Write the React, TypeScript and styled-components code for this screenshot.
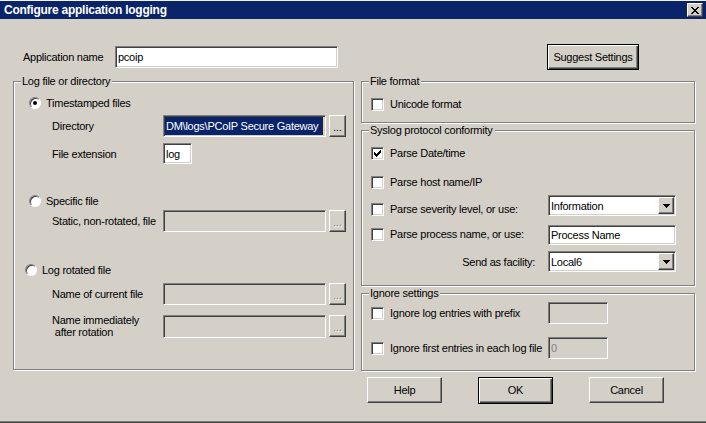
import React from 'react'
import styled, { createGlobalStyle } from 'styled-components'

const GlobalStyle = createGlobalStyle`
  html, body {
    margin: 0;
    padding: 0;
    background: #d4d0c8;
  }
  body {
    font-family: "Liberation Sans", Arial, sans-serif;
    font-size: 11px;
    letter-spacing: -0.25px;
    color: #000;
  }
`

const Window = styled.div`
  width: 706px;
  height: 423px;
  box-sizing: border-box;
  background: #d4d0c8;
  border-top: 1px solid #f4f3ef;
  border-bottom: 1px solid #404040;
  box-shadow: inset 0 -1px #808080;
  display: flex;
  flex-direction: column;
  overflow: hidden;
`

const TitleBar = styled.div`
  height: 18px;
  flex-shrink: 0;
  background: #0a246a;
  display: flex;
  align-items: center;
  justify-content: space-between;
  padding: 0 3px 0 4px;
`

const Title = styled.span`
  color: #fff;
  font-weight: bold;
  font-size: 12px;
  letter-spacing: -0.25px;
`

const raised = `
  border: 1px solid;
  border-color: #fff #404040 #404040 #fff;
  box-shadow: inset -1px -1px #808080, inset 1px 1px #d4d0c8;
`

const sunken = `
  border: 1px solid;
  border-color: #808080 #fff #fff #808080;
  box-shadow: inset 1px 1px #404040, inset -1px -1px #d4d0c8;
`

const CloseButton = styled.div`
  width: 16px;
  height: 14px;
  box-sizing: border-box;
  background: #d4d0c8;
  ${raised}
  display: flex;
  align-items: center;
  justify-content: center;
`

const Body = styled.div`
  display: flex;
  flex-direction: column;
  padding: 0 11px 0 13px;
`

const HeaderRow = styled.div`
  display: flex;
  align-items: center;
  height: 26px;
  margin-top: 25px;
  padding: 0 56px 0 10px;
`

const Columns = styled.div`
  display: grid;
  grid-template-columns: 341px 334px;
  column-gap: 7px;
  margin-top: 11px;
  align-items: start;
`

const RightColumn = styled.div`
  display: flex;
  flex-direction: column;
`

const GroupBox = styled.div<{ $h: number; $mt?: number }>`
  position: relative;
  box-sizing: border-box;
  height: ${p => p.$h}px;
  margin-top: ${p => p.$mt ?? 0}px;
  border: 1px solid #808080;
  box-shadow: inset 1px 1px #fff, 1px 1px #fff;
  display: flex;
  flex-direction: column;
  padding-left: ${p => (p.$h > 200 ? 15 : 9)}px;
`

const Caption = styled.span`
  position: absolute;
  top: -7px;
  left: 7px;
  padding: 0 2px 0 1px;
  line-height: 13px;
  background: #d4d0c8;
`

const Row = styled.div<{ $mt: number; $ml?: number; $align?: string }>`
  display: flex;
  align-items: ${p => p.$align ?? 'center'};
  margin-top: ${p => p.$mt}px;
  margin-left: ${p => p.$ml ?? 0}px;
  min-height: 14px;
`

const Label = styled.span<{ $w?: number; $right?: boolean; $pr?: number }>`
  width: ${p => (p.$w ? `${p.$w}px` : 'auto')};
  flex-shrink: 0;
  box-sizing: border-box;
  text-align: ${p => (p.$right ? 'right' : 'left')};
  padding-right: ${p => p.$pr ?? 0}px;
  line-height: 12px;
  white-space: pre;
`

const Field = styled.div<{ $w: number; $h: number; $disabled?: boolean; $dim?: boolean }>`
  width: ${p => p.$w}px;
  height: ${p => p.$h}px;
  flex-shrink: 0;
  box-sizing: border-box;
  background: ${p => (p.$disabled ? '#d4d0c8' : '#fff')};
  color: ${p => (p.$dim ? '#808080' : '#000')};
  ${sunken}
  display: flex;
  align-items: center;
  padding: 0 2px 0 2px;
  overflow: hidden;
  white-space: nowrap;
`

const Selected = styled.span`
  align-self: stretch;
  flex: 1;
  margin: 1px -1px 1px -1px;
  padding-left: 1px;
  background: #0a246a;
  color: #fff;
  display: flex;
  align-items: center;
  overflow: hidden;
  white-space: nowrap;
`

const Caret = styled.span`
  width: 1px;
  align-self: stretch;
  margin-left: auto;
  background: #f5d38a;
  flex-shrink: 0;
`

const BrowseButton = styled.div<{ $disabled?: boolean }>`
  width: 17px;
  height: 22px;
  margin-left: 3px;
  box-sizing: border-box;
  flex-shrink: 0;
  background: #d4d0c8;
  ${raised}
  display: flex;
  align-items: center;
  justify-content: center;
  padding-top: 3px;
  font-size: 10px;
  letter-spacing: 0;
  color: ${p => (p.$disabled ? '#808080' : '#000')};
  text-shadow: ${p => (p.$disabled ? '1px 1px #fff' : 'none')};
`

const RadioCircle = styled.span<{ $checked?: boolean }>`
  width: 12px;
  height: 12px;
  box-sizing: border-box;
  border-radius: 50%;
  background: #fff;
  border: 1px solid;
  border-color: #808080 #fff #fff #808080;
  box-shadow: inset 1px 1px #404040;
  display: flex;
  align-items: center;
  justify-content: center;
  flex-shrink: 0;
  margin-right: 5px;
  &::after {
    content: '';
    width: 4px;
    height: 4px;
    border-radius: 50%;
    background: #000;
    display: ${p => (p.$checked ? 'block' : 'none')};
  }
`

const CheckGroup = styled.div<{ $w?: number; $mt?: number }>`
  display: flex;
  align-items: center;
  width: ${p => (p.$w ? `${p.$w}px` : 'auto')};
  height: 14px;
  flex-shrink: 0;
  margin-top: ${p => p.$mt ?? 0}px;
`

const CheckBox = styled.span`
  width: 13px;
  height: 13px;
  box-sizing: border-box;
  background: #fff;
  ${sunken}
  display: flex;
  align-items: center;
  justify-content: center;
  flex-shrink: 0;
  margin-right: 6px;
`

const Combo = styled(Field)`
  padding: 0 2px 0 2px;
  justify-content: space-between;
`

const ComboArrow = styled.span`
  width: 16px;
  height: 17px;
  box-sizing: border-box;
  background: #d4d0c8;
  ${raised}
  display: flex;
  align-items: center;
  justify-content: center;
  flex-shrink: 0;
  margin-right: -1px;
`

const ButtonRow = styled.div`
  display: flex;
  margin-top: 6px;
  padding-left: 6px;
  column-gap: 36px;
`

const PushButton = styled.div<{ $default?: boolean; $w: number; $h: number; $push?: boolean }>`
  width: ${p => p.$w}px;
  height: ${p => p.$h}px;
  box-sizing: border-box;
  flex-shrink: 0;
  margin-left: ${p => (p.$push ? 'auto' : '0')};
  background: #d4d0c8;
  border: 1px solid;
  border-color: ${p => (p.$default ? '#000' : '#fff #404040 #404040 #fff')};
  box-shadow: ${p =>
    p.$default
      ? 'inset 1px 1px #fff, inset -1px -1px #404040, inset -2px -2px #808080'
      : 'inset -1px -1px #808080, inset 1px 1px #d4d0c8'};
  display: flex;
  align-items: center;
  justify-content: center;
  padding-bottom: 1px;
`

const CheckMark = () => (
  <svg width="7" height="7" viewBox="0 0 7 7" shapeRendering="crispEdges">
    <path d="M0 2h1v1h1v1h1V3h1V2h1V1h1V0h1v3h-1v1h-1v1h-1v1h-1v1H2V6H1V5H0z" fill="#000" />
  </svg>
)

const DownArrow = () => (
  <svg width="7" height="4" viewBox="0 0 7 4" shapeRendering="crispEdges">
    <path d="M0 0h7v1h-1v1h-1v1h-1v1H3V3H2V2H1V1H0z" fill="#000" />
  </svg>
)

const CloseGlyph = () => (
  <svg width="8" height="7" viewBox="0 0 8 7" shapeRendering="crispEdges">
    <path
      d="M0 0h2v1h1v1h2V1h1V0h2v1H7v1H6v1H5v1h1v1h1v1h1v1H6V6H5V5H3v1H2v1H0V6h1V5h1V4h1V3H2V2H1V1H0z"
      fill="#000"
    />
  </svg>
)

type OptionProps = { checked?: boolean; children: React.ReactNode }

const Radio: React.FC<OptionProps> = ({ checked, children }) => (
  <>
    <RadioCircle $checked={checked} />
    <Label>{children}</Label>
  </>
)

const Check: React.FC<OptionProps & { w?: number; mt?: number }> = ({ checked, children, w, mt }) => (
  <CheckGroup $w={w} $mt={mt}>
    <CheckBox>{checked && <CheckMark />}</CheckBox>
    <Label>{children}</Label>
  </CheckGroup>
)

const Dropdown: React.FC<{ value: string }> = ({ value }) => (
  <Combo $w={128} $h={21}>
    <span>{value}</span>
    <ComboArrow>
      <DownArrow />
    </ComboArrow>
  </Combo>
)

const PathField: React.FC<{ label: string; mt: number; disabled?: boolean; children?: React.ReactNode; h?: number }> = ({
  label,
  mt,
  disabled,
  children,
  h = 22,
}) => (
  <Row $mt={mt} $ml={23}>
    <Label $w={111}>{label}</Label>
    <Field $w={163} $h={h} $disabled={disabled}>
      {children}
    </Field>
    <BrowseButton $disabled={disabled}>...</BrowseButton>
  </Row>
)

export default function App() {
  return (
    <>
      <GlobalStyle />
      <Window>
        <TitleBar>
          <Title>Configure application logging</Title>
          <CloseButton>
            <CloseGlyph />
          </CloseButton>
        </TitleBar>
        <Body>
          <HeaderRow>
            <Label $w={92}>Application name</Label>
            <Field $w={223} $h={22}>pcoip</Field>
            <PushButton $default $push $w={92} $h={26}>
              Suggest Settings
            </PushButton>
          </HeaderRow>

          <Columns>
            <GroupBox $h={289}>
              <Caption>Log file or directory</Caption>
              <Row $mt={14}>
                <Radio checked>Timestamped files</Radio>
              </Row>
              <PathField label="Directory" mt={5}>
                <Selected>
                  DM\logs\PCoIP Secure Gateway
                  <Caret />
                </Selected>
              </PathField>
              <Row $mt={6} $ml={23}>
                <Label $w={111}>File extension</Label>
                <Field $w={29} $h={21}>log</Field>
              </Row>
              <Row $mt={30}>
                <Radio>Specific file</Radio>
              </Row>
              <PathField label="Static, non-rotated, file" mt={2} disabled />
              <Row $mt={31} $ml={-4}>
                <Radio>Log rotated file</Radio>
              </Row>
              <PathField label="Name of current file" mt={6} disabled />
              <PathField label={'Name immediately\n after rotation'} mt={9} disabled h={23} />
            </GroupBox>

            <RightColumn>
              <GroupBox $h={42}>
                <Caption>File format</Caption>
                <Row $mt={15}>
                  <Check>Unicode format</Check>
                </Row>
              </GroupBox>

              <GroupBox $h={156} $mt={7}>
                <Caption>Syslog protocol conformity</Caption>
                <Row $mt={15}>
                  <Check checked>Parse Date/time</Check>
                </Row>
                <Row $mt={15}>
                  <Check>Parse host name/IP</Check>
                </Row>
                <Row $mt={6} $align="flex-start">
                  <Check w={177} mt={7}>
                    Parse severity level, or use:
                  </Check>
                  <Dropdown value="Information" />
                </Row>
                <Row $mt={9} $align="flex-start">
                  <Check w={177} mt={2}>
                    Parse process name, or use:
                  </Check>
                  <Field $w={128} $h={20}>Process Name</Field>
                </Row>
                <Row $mt={6}>
                  <Label $w={177} $right $pr={13}>
                    Send as facility:
                  </Label>
                  <Dropdown value="Local6" />
                </Row>
              </GroupBox>

              <GroupBox $h={78} $mt={7}>
                <Caption>Ignore settings</Caption>
                <Row $mt={8}>
                  <Check w={177}>Ignore log entries with prefix</Check>
                  <Field $w={60} $h={22} $disabled />
                </Row>
                <Row $mt={13}>
                  <Check w={177}>Ignore first entries in each log file</Check>
                  <Field $w={60} $h={22} $disabled $dim>
                    0
                  </Field>
                </Row>
              </GroupBox>

              <ButtonRow>
                <PushButton $w={75} $h={26}>Help</PushButton>
                <PushButton $default $w={75} $h={27}>OK</PushButton>
                <PushButton $w={75} $h={26}>Cancel</PushButton>
              </ButtonRow>
            </RightColumn>
          </Columns>
        </Body>
      </Window>
    </>
  )
}
